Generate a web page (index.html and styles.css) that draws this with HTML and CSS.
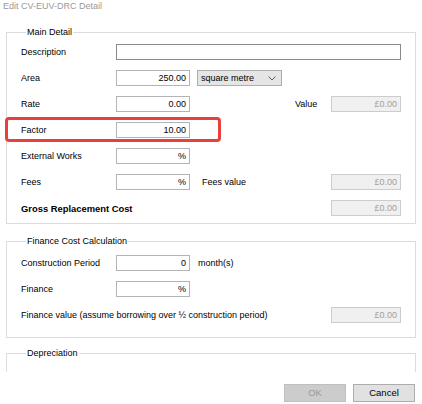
FILE: index.html
```html
<!DOCTYPE html>
<html>
<head>
<meta charset="utf-8">
<link rel="stylesheet" href="styles.css">
</head>
<body>
<div class="title">Edit CV-EUV-DRC Detail</div>
<div class="scroll">
  <fieldset class="group main">
    <legend>Main Detail</legend>
    <div class="row">
      <span class="lbl">Description</span>
      <span class="box wide"></span>
    </div>
    <div class="row">
      <span class="lbl">Area</span>
      <span class="box num">250.00</span>
      <span class="select"><span>square metre</span><svg width="8" height="5" viewBox="0 0 8 5"><polyline points="0.5,0.5 4,4 7.5,0.5" fill="none" stroke="#606060" stroke-width="1"/></svg></span>
    </div>
    <div class="row">
      <span class="lbl">Rate</span>
      <span class="box num">0.00</span>
      <span class="rlbl">Value</span>
      <span class="box dis">£0.00</span>
    </div>
    <div class="row hl">
      <span class="lbl">Factor</span>
      <span class="box num">10.00</span>
      <span class="mark"></span>
    </div>
    <div class="row">
      <span class="lbl">External Works</span>
      <span class="box num">%</span>
    </div>
    <div class="row">
      <span class="lbl">Fees</span>
      <span class="box num">%</span>
      <span class="feeslbl">Fees value</span>
      <span class="box dis">£0.00</span>
    </div>
    <div class="row">
      <span class="lbl bold">Gross Replacement Cost</span>
      <span class="box dis">£0.00</span>
    </div>
  </fieldset>
  <fieldset class="group fin">
    <legend>Finance Cost Calculation</legend>
    <div class="row">
      <span class="lbl">Construction Period</span>
      <span class="box num">0</span>
      <span class="unit">month(s)</span>
    </div>
    <div class="row">
      <span class="lbl">Finance</span>
      <span class="box num">%</span>
    </div>
    <div class="row">
      <span class="lbl long">Finance value (assume borrowing over ½ construction period)</span>
      <span class="box dis">£0.00</span>
    </div>
  </fieldset>
  <fieldset class="group dep">
    <legend>Depreciation</legend>
  </fieldset>
</div>
<div class="buttons">
  <span class="btn disabled">OK</span>
  <span class="btn">Cancel</span>
</div>
</body>
</html>
```
FILE: styles.css
```css
html, body {
  margin: 0;
  padding: 0;
  background: #ffffff;
}
body {
  width: 422px;
  height: 404px;
  overflow: hidden;
  font-family: "Liberation Sans", Arial, sans-serif;
  font-size: 9px;
  color: #000;
}
.title {
  height: 13px;
  line-height: 13px;
  padding-left: 3px;
  margin-bottom: 13px;
  color: #9a9a9a;
}
.scroll {
  height: 346px;
  overflow: hidden;
}
.group {
  margin: 0 6px;
  padding: 0 14px;
  border: 1px solid #dcdcdc;
  min-width: 0;
}
.group legend {
  padding: 0 1px;
  margin-left: 5px;
  line-height: 13px;
  height: 13px;
  font-size: 9px;
}
.main {
  padding-top: 5px;
  padding-bottom: 7px;
}
.fin {
  margin-top: 11px;
  padding-top: 7px;
  padding-bottom: 14px;
}
.dep {
  margin-top: 9px;
  height: 80px;
}
.row {
  display: flex;
  align-items: center;
  height: 16px;
  margin-bottom: 10px;
  position: relative;
}
.row:last-child {
  margin-bottom: 0;
}
.lbl {
  width: 95px;
  flex: none;
  white-space: nowrap;
}
.lbl.bold {
  font-weight: bold;
  font-size: 9.4px;
  flex: 1;
}
.lbl.long {
  flex: 1;
}
.box {
  box-sizing: border-box;
  height: 16px;
  width: 74px;
  border: 1px solid #b4b4b4;
  background: #fff;
  line-height: 14px;
  text-align: right;
  padding-right: 3px;
  flex: none;
}
.box.wide {
  flex: 1;
  width: auto;
  border-color: #8a8a8a;
}
.box.dis {
  width: 70px;
  background: #f0f0f0;
  border-color: #cccccc;
  color: #a0a0a0;
  margin-left: auto;
}
.select {
  box-sizing: border-box;
  margin-left: 7px;
  width: 85px;
  height: 16px;
  border: 1px solid #adadad;
  background: #e5e5e5;
  display: flex;
  align-items: center;
  justify-content: space-between;
  padding: 0 5px 0 3px;
}
.rlbl {
  margin-left: auto;
  width: 36px;
}
.rlbl + .box.dis {
  margin-left: 0;
}
.feeslbl {
  margin-left: 12px;
}
.unit {
  margin-left: 8px;
}
.mark {
  position: absolute;
  left: -16px;
  top: -5px;
  width: 216px;
  height: 25px;
  box-sizing: border-box;
  border: 3px solid #e8403c;
  border-radius: 4px;
  pointer-events: none;
}
.buttons {
  display: flex;
  justify-content: flex-end;
  gap: 7px;
  margin-top: 12px;
  padding-right: 7px;
}
.btn {
  box-sizing: border-box;
  width: 62px;
  height: 18px;
  line-height: 16px;
  text-align: center;
  border: 1px solid #adadad;
  background: #e1e1e1;
  color: #000;
  font-size: 9.5px;
}
.btn.disabled {
  background: #cccccc;
  border-color: #bfbfbf;
  color: #9a9a9a;
}
```
